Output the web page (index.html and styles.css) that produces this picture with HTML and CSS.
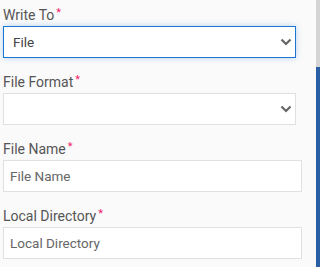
FILE: index.html
```html
<!DOCTYPE html>
<html lang="en">
<head>
    <meta charset="UTF-8">
    <meta name="viewport" content="width=device-width, initial-scale=1.0">
    <title>Write To</title>
    <link rel="stylesheet" href="styles.css">
</head>
<body>
    <div class="page">
        <div class="form">
            <div class="field">
                <label class="label">Write To<span class="req">*</span></label>
                <div class="select focused">
                    <span class="value">File</span>
                    <svg class="chevron" width="12" height="8" viewBox="0 0 12 8"><path d="M1.5 1.5 L6 6 L10.5 1.5" fill="none" stroke="#666" stroke-width="2.2"/></svg>
                </div>
            </div>
            <div class="field">
                <label class="label">File Format<span class="req">*</span></label>
                <div class="select">
                    <span class="value"></span>
                    <svg class="chevron" width="12" height="8" viewBox="0 0 12 8"><path d="M1.5 1.5 L6 6 L10.5 1.5" fill="none" stroke="#666" stroke-width="2.2"/></svg>
                </div>
            </div>
            <div class="field">
                <label class="label" for="fileName">File Name<span class="req">*</span></label>
                <input class="input" type="text" id="fileName" placeholder="File Name">
            </div>
            <div class="field">
                <label class="label" for="localDir">Local Directory<span class="req">*</span></label>
                <input class="input" type="text" id="localDir" placeholder="Local Directory">
            </div>
        </div>
        <div class="scrollbar">
            <div class="track"></div>
            <div class="thumb"></div>
        </div>
    </div>
</body>
</html>
```

FILE: styles.css
```css
html, body {
    margin: 0;
    height: 100%;
}
body {
    font-family: Roboto, Arial, sans-serif;
    background: #fafafa;
    color: #555;
}
.page {
    display: flex;
    height: 100%;
    overflow: hidden;
}
.form {
    flex: 1;
    padding: 5px 0 0 3px;
}
.field {
    margin-bottom: 14px;
}
.label {
    display: block;
    font-size: 14px;
    line-height: 20px;
    height: 20px;
    margin-bottom: 1px;
    color: #555;
}
.req {
    color: #f2226a;
    font-size: 11px;
    line-height: 0;
    margin-left: 2px;
    vertical-align: 4px;
}
.select {
    box-sizing: border-box;
    width: 293px;
    height: 32px;
    border: 1px solid #e0e0e0;
    background: #fff;
    display: flex;
    align-items: center;
    padding: 0 3px 0 9px;
    font-size: 13.5px;
    color: #444;
}
.select.focused {
    border-color: #1a76d2;
    box-shadow: 0 0 6px rgba(26, 118, 210, 0.3);
}
.value {
    flex: 1;
}
.chevron {
    display: block;
}
.input {
    box-sizing: border-box;
    display: block;
    width: 299px;
    height: 32px;
    margin: 0;
    border: 1px solid #e0e0e0;
    background: #fff;
    padding: 0 6px;
    font-family: inherit;
    font-size: 13.5px;
    color: #444;
    outline: none;
}
.input::placeholder {
    color: #666;
}
.scrollbar {
    width: 4px;
    display: flex;
    flex-direction: column;
}
.track {
    height: 67px;
    background: #d4d4d4;
}
.thumb {
    flex: 1;
    background: #2a5fa6;
}
```
